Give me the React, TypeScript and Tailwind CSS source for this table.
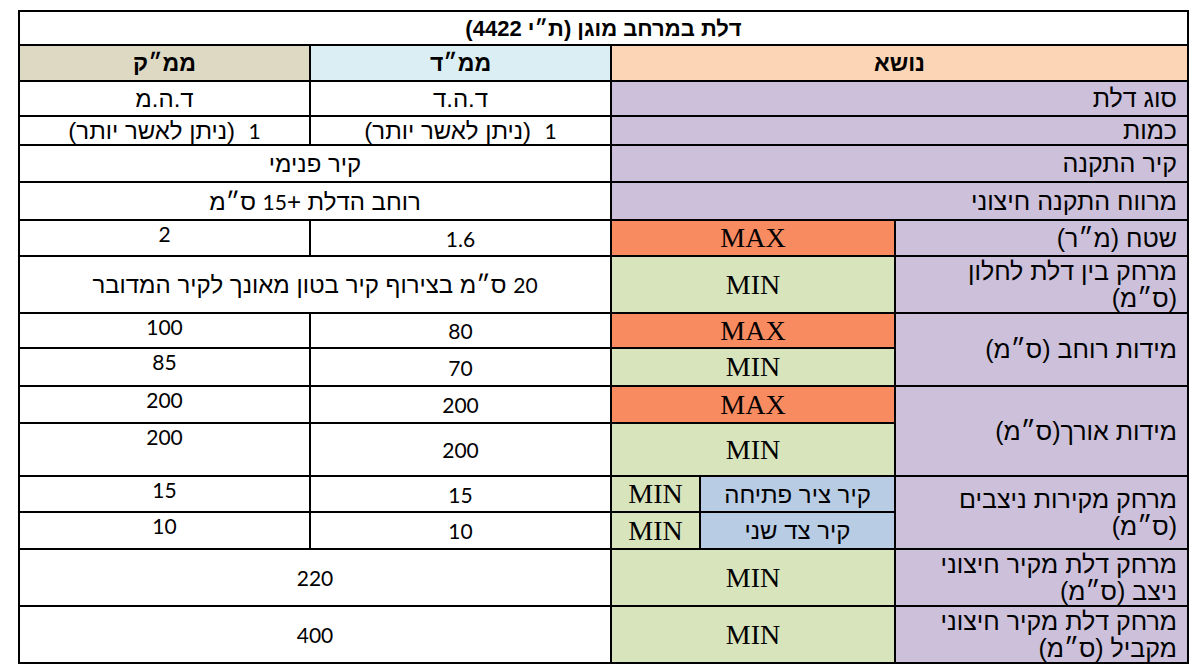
import type { ReactNode } from 'react';

const heb = "font-['Liberation_Sans',sans-serif]";
const num = "font-['Lato','Liberation_Sans',sans-serif]";
const serif = "font-['Liberation_Serif',serif]";

function Cell({ className, children }: { className: string; children?: ReactNode }) {
  return <div className={`flex ${className}`}>{children}</div>;
}

// quick helpers for the repeated cell looks
const label = `bg-[#ccc0da] items-center justify-start pr-[10px] text-[25px] leading-[27px] text-black ${heb}`;
const value = `bg-white items-center justify-center text-[24px] leading-[27px] text-black ${heb}`;
const numTop = `bg-white items-start justify-center pt-[1px] text-[21px] leading-[24px] text-black ${num}`;
const numMid = `bg-white items-center justify-center text-[21px] leading-[27px] text-black ${num}`;
const max = `bg-[#f98b60] items-center justify-center text-[28px] leading-none text-black ${serif}`;
const min = `bg-[#d8e4bc] items-center justify-center text-[28px] leading-none text-black ${serif}`;
const side = `bg-[#b8cce4] items-center justify-center text-[24px] leading-[27px] text-black ${heb}`;
const head = `items-center justify-center text-[23px] leading-[27px] font-bold text-black ${heb}`;

export default function App() {
  return (
    <div className="min-h-[672px] w-[1198px] bg-white pt-[10px] pl-[18px]">
      <div
        dir="rtl"
        className="grid w-[1171px] grid-cols-[291px_193px_87px_299px_289px] grid-rows-[32px_34px_33px_27px_35px_36px_34px_55px_33px_36px_35px_51px_34px_35px_55px_55px] gap-[2px] border-2 border-black bg-black"
      >
        {/* title */}
        <Cell className={`col-span-5 row-start-1 bg-white items-center justify-center text-[22px] leading-[27px] font-bold text-black ${heb}`}>
          דלת במרחב מוגן (ת״י 4422)
        </Cell>

        {/* header */}
        <Cell className={`col-start-1 col-span-3 row-start-2 bg-[#fbd5b5] ${head}`}>נושא</Cell>
        <Cell className={`col-start-4 row-start-2 bg-[#daeef3] ${head}`}>ממ״ד</Cell>
        <Cell className={`col-start-5 row-start-2 bg-[#ddd9c3] ${head}`}>ממ״ק</Cell>

        {/* door type */}
        <Cell className={`col-start-1 col-span-3 row-start-3 ${label}`}>סוג דלת</Cell>
        <Cell className={`col-start-4 row-start-3 ${value}`}>ד.ה.ד</Cell>
        <Cell className={`col-start-5 row-start-3 ${value}`}>ד.ה.מ</Cell>

        {/* quantity */}
        <Cell className={`col-start-1 col-span-3 row-start-4 ${label}`}>כמות</Cell>
        <Cell className={`col-start-4 row-start-4 ${value}`}>
          <span className={`text-[21px] ${num}`}>1</span>&nbsp;&nbsp;(ניתן לאשר יותר)
        </Cell>
        <Cell className={`col-start-5 row-start-4 ${value}`}>
          <span className={`text-[21px] ${num}`}>1</span>&nbsp;&nbsp;(ניתן לאשר יותר)
        </Cell>

        {/* wall */}
        <Cell className={`col-start-1 col-span-3 row-start-5 ${label}`}>קיר התקנה</Cell>
        <Cell className={`col-start-4 col-span-2 row-start-5 ${value}`}>קיר פנימי</Cell>

        {/* clearance */}
        <Cell className={`col-start-1 col-span-3 row-start-6 ${label}`}>מרווח התקנה חיצוני</Cell>
        <Cell className={`col-start-4 col-span-2 row-start-6 ${value}`}>
          רוחב הדלת +<span className={`text-[21px] ${num}`}>15</span>&nbsp;ס״מ
        </Cell>

        {/* area */}
        <Cell className={`col-start-1 row-start-7 ${label}`}>שטח (מ״ר)</Cell>
        <Cell className={`col-start-2 col-span-2 row-start-7 ${max}`}>MAX</Cell>
        <Cell className={`col-start-4 row-start-7 ${numMid}`}>1.6</Cell>
        <Cell className={`col-start-5 row-start-7 ${numTop}`}>2</Cell>

        {/* door to window */}
        <Cell className={`col-start-1 row-start-8 ${label}`}>מרחק בין דלת לחלון (ס״מ)</Cell>
        <Cell className={`col-start-2 col-span-2 row-start-8 ${min}`}>MIN</Cell>
        <Cell className={`col-start-4 col-span-2 row-start-8 ${value}`}>
          <span className={`text-[21px] ${num}`}>20</span>&nbsp;ס״מ בצירוף קיר בטון מאונך לקיר המדובר
        </Cell>

        {/* width */}
        <Cell className={`col-start-1 row-start-9 row-span-2 ${label}`}>מידות רוחב (ס״מ)</Cell>
        <Cell className={`col-start-2 col-span-2 row-start-9 ${max}`}>MAX</Cell>
        <Cell className={`col-start-4 row-start-9 ${numMid}`}>80</Cell>
        <Cell className={`col-start-5 row-start-9 ${numTop}`}>100</Cell>
        <Cell className={`col-start-2 col-span-2 row-start-10 ${min}`}>MIN</Cell>
        <Cell className={`col-start-4 row-start-10 ${numMid}`}>70</Cell>
        <Cell className={`col-start-5 row-start-10 ${numTop}`}>85</Cell>

        {/* height */}
        <Cell className={`col-start-1 row-start-11 row-span-2 ${label}`}>מידות אורך(ס״מ)</Cell>
        <Cell className={`col-start-2 col-span-2 row-start-11 ${max}`}>MAX</Cell>
        <Cell className={`col-start-4 row-start-11 ${numMid}`}>200</Cell>
        <Cell className={`col-start-5 row-start-11 ${numTop}`}>200</Cell>
        <Cell className={`col-start-2 col-span-2 row-start-12 ${min}`}>MIN</Cell>
        <Cell className={`col-start-4 row-start-12 ${numMid}`}>200</Cell>
        <Cell className={`col-start-5 row-start-12 ${numTop}`}>200</Cell>

        {/* perpendicular walls */}
        <Cell className={`col-start-1 row-start-13 row-span-2 ${label}`}>מרחק מקירות ניצבים (ס״מ)</Cell>
        <Cell className={`col-start-2 row-start-13 ${side}`}>קיר ציר פתיחה</Cell>
        <Cell className={`col-start-3 row-start-13 ${min}`}>MIN</Cell>
        <Cell className={`col-start-4 row-start-13 ${numMid}`}>15</Cell>
        <Cell className={`col-start-5 row-start-13 ${numTop}`}>15</Cell>
        <Cell className={`col-start-2 row-start-14 ${side}`}>קיר צד שני</Cell>
        <Cell className={`col-start-3 row-start-14 ${min}`}>MIN</Cell>
        <Cell className={`col-start-4 row-start-14 ${numMid}`}>10</Cell>
        <Cell className={`col-start-5 row-start-14 ${numTop}`}>10</Cell>

        {/* outer wall distances */}
        <Cell className={`col-start-1 row-start-15 ${label}`}>מרחק דלת מקיר חיצוני ניצב (ס״מ)</Cell>
        <Cell className={`col-start-2 col-span-2 row-start-15 ${min}`}>MIN</Cell>
        <Cell className={`col-start-4 col-span-2 row-start-15 ${numMid}`}>220</Cell>

        <Cell className={`col-start-1 row-start-16 ${label}`}>מרחק דלת מקיר חיצוני מקביל (ס״מ)</Cell>
        <Cell className={`col-start-2 col-span-2 row-start-16 ${min}`}>MIN</Cell>
        <Cell className={`col-start-4 col-span-2 row-start-16 ${numMid}`}>400</Cell>
      </div>
    </div>
  );
}
